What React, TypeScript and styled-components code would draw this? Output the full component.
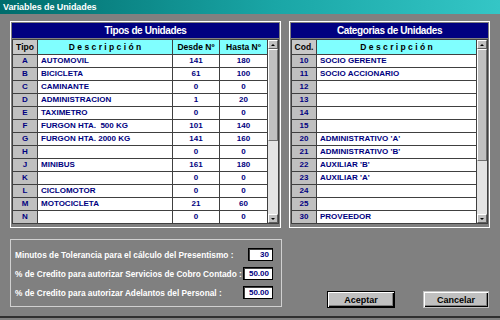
import { Fragment } from "react";
import styled, { createGlobalStyle } from "styled-components";

const GlobalStyle = createGlobalStyle`
	html, body {
		margin: 0;
		padding: 0;
		background: #808080;
	}
	* {
		box-sizing: border-box;
	}
`;

const NAVY = "#000080";
const LINE = "#404040";

const WindowStyle = styled.div`
	width: 500px;
	height: 318px;
	background: #808080;
	border-bottom: 2px solid #303030;
	font-family: "Liberation Sans", Arial, sans-serif;
	display: flex;
	flex-direction: column;
	overflow: hidden;
`;

const TitleBar = styled.div`
	height: 14px;
	padding-left: 3px;
	background: linear-gradient(to right, #006c6c, #1aa6a6 55%, #34c6c6);
	color: #fff;
	font-size: 9px;
	font-weight: bold;
	letter-spacing: -0.1px;
	line-height: 14px;
	white-space: nowrap;
`;

const Body = styled.div`
	padding: 7px 0 0 10px;
	display: flex;
	flex-direction: column;
`;

const TopRow = styled.div`
	display: flex;
	gap: 8px;
`;

const Panel = styled.div<{ $w: number }>`
	width: ${(p) => p.$w}px;
	height: 207px;
	border: 1px solid #fff;
	padding: 1px 1px 3px 1px;
	display: flex;
	flex-direction: column;
	gap: 1px;
`;

const PanelTitle = styled.div`
	height: 15px;
	background: ${NAVY};
	color: #fff;
	font-size: 10px;
	font-weight: bold;
	letter-spacing: -0.4px;
	line-height: 15px;
	text-align: center;
`;

const Grid = styled.div<{ $cols: string }>`
	display: grid;
	grid-template-columns: ${(p) => p.$cols};
	grid-template-rows: 14px repeat(13, 12px);
	gap: 1px;
	background: ${LINE};
	border: 1px solid ${LINE};
	font-size: 8px;
	font-weight: bold;
`;

const HeadCell = styled.div<{ $gray?: boolean }>`
	background: ${(p) => (p.$gray ? "#c8c8c8" : "#80ffff")};
	color: #000;
	font-size: 8.5px;
	line-height: 14px;
	text-align: center;
	white-space: pre;
`;

const KeyCell = styled.div`
	background: #c0c0c0;
	color: ${NAVY};
	line-height: 12px;
	text-align: center;
`;

const TextCell = styled.div<{ $center?: boolean }>`
	background: #fff;
	color: ${NAVY};
	line-height: 12px;
	padding-left: ${(p) => (p.$center ? 0 : 3)}px;
	text-align: ${(p) => (p.$center ? "center" : "left")};
	white-space: pre;
	overflow: hidden;
`;

const ScrollBar = styled.div`
	grid-row: 1 / -1;
	grid-column: -2 / -1;
	background: #e4e4e4;
	display: flex;
	flex-direction: column;
`;

const ScrollButton = styled.div`
	height: 9px;
	background: #c0c0c0;
	border-top: 1px solid #fff;
	border-left: 1px solid #fff;
	border-right: 1px solid #606060;
	border-bottom: 1px solid #606060;
	display: flex;
	align-items: center;
	justify-content: center;
`;

const Arrow = styled.div<{ $down?: boolean }>`
	width: 0;
	height: 0;
	border-left: 2px solid transparent;
	border-right: 2px solid transparent;
	${(p) =>
		p.$down ? "border-top: 2px solid #000;" : "border-bottom: 2px solid #000;"}
`;

const Thumb = styled.div<{ $h: number }>`
	height: ${(p) => p.$h}px;
	background: #c0c0c0;
	border-top: 1px solid #fff;
	border-left: 1px solid #fff;
	border-right: 1px solid #707070;
	border-bottom: 1px solid #707070;
`;

const Track = styled.div`
	flex: 1;
`;

const BottomRow = styled.div`
	display: flex;
	align-items: flex-end;
	margin-top: 11px;
`;

const GroupBox = styled.div`
	width: 272px;
	height: 68px;
	border: 1px solid #d0d0d0;
	padding: 5px 8px 0 4px;
	display: flex;
	flex-direction: column;
`;

const FieldRow = styled.div`
	height: 19px;
	display: flex;
	align-items: center;
	justify-content: space-between;
`;

const FieldLabel = styled.span`
	color: #fff;
	font-size: 8.3px;
	font-weight: bold;
	white-space: nowrap;
`;

const FieldInput = styled.div<{ $w: number }>`
	width: ${(p) => p.$w}px;
	height: 13px;
	background: #fff;
	border: 1px solid #000;
	box-shadow: inset 1px 1px 0 #404040;
	color: ${NAVY};
	font-size: 8px;
	font-weight: bold;
	line-height: 11px;
	text-align: right;
	padding-right: 3px;
`;

const Buttons = styled.div`
	display: flex;
	gap: 28px;
	margin-left: 45px;
	margin-bottom: -1px;
`;

const Button = styled.button<{ $default?: boolean; $w: number }>`
	width: ${(p) => p.$w}px;
	height: 17px;
	padding: 0;
	background: #c0c0c0;
	border: 1px solid ${(p) => (p.$default ? "#000" : "transparent")};
	box-shadow: inset 1px 1px 0 #fff, inset -1px -1px 0 #000,
		inset -2px -2px 0 #808080;
	font-family: "Liberation Sans", Arial, sans-serif;
	font-size: 9px;
	font-weight: bold;
	color: #000;
`;

const tipos = [
	["A", "AUTOMOVIL", "141", "180"],
	["B", "BICICLETA", "61", "100"],
	["C", "CAMINANTE", "0", "0"],
	["D", "ADMINISTRACION", "1", "20"],
	["E", "TAXIMETRO", "0", "0"],
	["F", "FURGON HTA.  500 KG", "101", "140"],
	["G", "FURGON HTA. 2000 KG", "141", "160"],
	["H", "", "0", "0"],
	["J", "MINIBUS", "161", "180"],
	["K", "", "0", "0"],
	["L", "CICLOMOTOR", "0", "0"],
	["M", "MOTOCICLETA", "21", "60"],
	["N", "", "0", "0"],
];

const categorias = [
	["10", "SOCIO GERENTE"],
	["11", "SOCIO ACCIONARIO"],
	["12", ""],
	["13", ""],
	["14", ""],
	["15", ""],
	["20", "ADMINISTRATIVO 'A'"],
	["21", "ADMINISTRATIVO 'B'"],
	["22", "AUXILIAR 'B'"],
	["23", "AUXILIAR 'A'"],
	["24", ""],
	["25", ""],
	["30", "PROVEEDOR"],
];

const Scroll = ({ thumb }: { thumb: number }) => (
	<ScrollBar>
		<ScrollButton>
			<Arrow />
		</ScrollButton>
		<Thumb $h={thumb} />
		<Track />
		<ScrollButton>
			<Arrow $down />
		</ScrollButton>
	</ScrollBar>
);

const App = () => {
	return (
		<>
			<GlobalStyle />
			<WindowStyle>
				<TitleBar>Variables de Unidades</TitleBar>
				<Body>
					<TopRow>
						<Panel $w={271}>
							<PanelTitle>Tipos de Unidades</PanelTitle>
							<Grid $cols="24px 134px 46px 47px 10px">
								<HeadCell $gray>Tipo</HeadCell>
								<HeadCell>D e s c r i p c i ó n</HeadCell>
								<HeadCell>Desde Nº</HeadCell>
								<HeadCell>Hasta Nº</HeadCell>
								<Scroll thumb={92} />
								{tipos.map(([k, d, a, b]) => (
									<Fragment key={k}>
										<KeyCell>{k}</KeyCell>
										<TextCell>{d}</TextCell>
										<TextCell $center>{a}</TextCell>
										<TextCell $center>{b}</TextCell>
									</Fragment>
								))}
							</Grid>
						</Panel>
						<Panel $w={201}>
							<PanelTitle>Categorias de Unidades</PanelTitle>
							<Grid $cols="24px 159px 10px">
								<HeadCell $gray>Cod.</HeadCell>
								<HeadCell>D e s c r i p c i ó n</HeadCell>
								<Scroll thumb={112} />
								{categorias.map(([k, d]) => (
									<Fragment key={k}>
										<KeyCell>{k}</KeyCell>
										<TextCell>{d}</TextCell>
									</Fragment>
								))}
							</Grid>
						</Panel>
					</TopRow>
					<BottomRow>
						<GroupBox>
							<FieldRow>
								<FieldLabel>
									Minutos de Tolerancia para el cálculo del Presentismo :
								</FieldLabel>
								<FieldInput $w={25}>30</FieldInput>
							</FieldRow>
							<FieldRow>
								<FieldLabel>
									% de Credito para autorizar Servicios de Cobro Contado :
								</FieldLabel>
								<FieldInput $w={30}>50.00</FieldInput>
							</FieldRow>
							<FieldRow>
								<FieldLabel>
									% de Credito para autorizar Adelantos del Personal :
								</FieldLabel>
								<FieldInput $w={30}>50.00</FieldInput>
							</FieldRow>
						</GroupBox>
						<Buttons>
							<Button $default $w={68}>
								Aceptar
							</Button>
							<Button $w={66}>Cancelar</Button>
						</Buttons>
					</BottomRow>
				</Body>
			</WindowStyle>
		</>
	);
};

export default App;
